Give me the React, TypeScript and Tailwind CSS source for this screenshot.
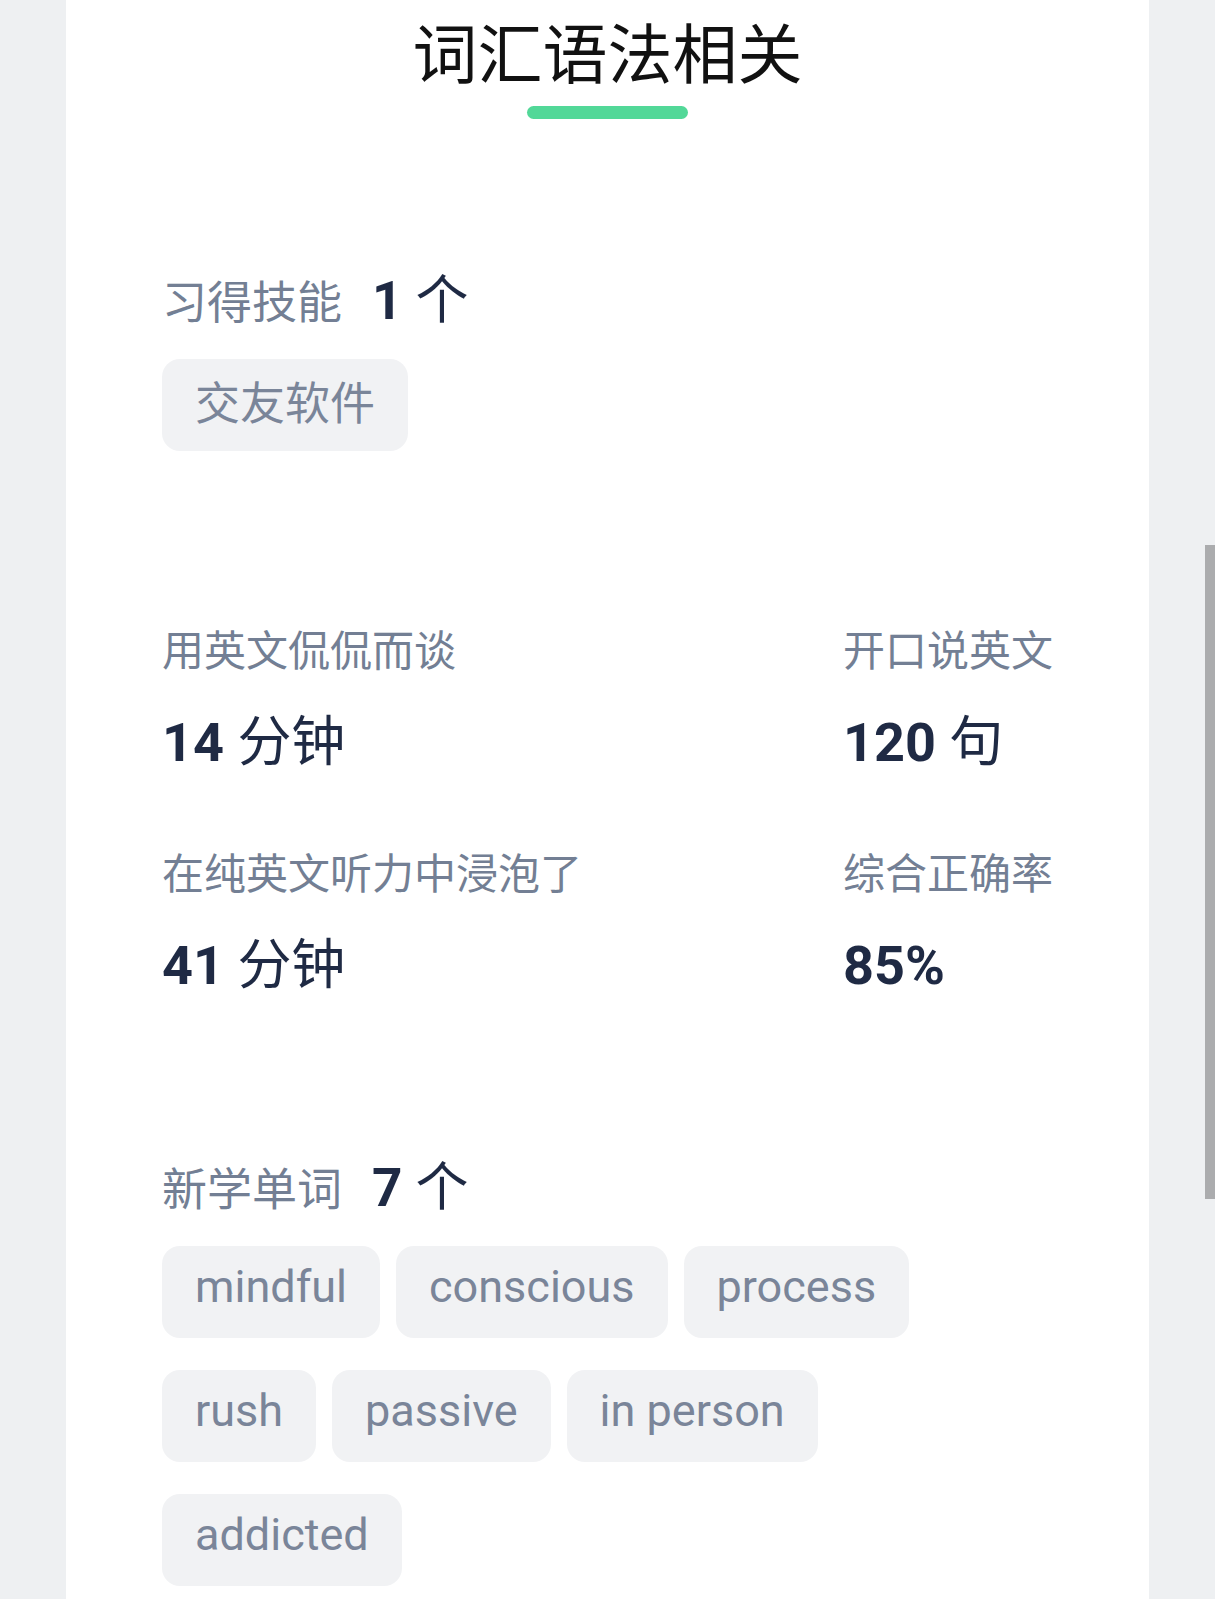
import React from "react";

const FONT = 'Roboto, "Noto Sans CJK SC", "Noto Sans", sans-serif';

function Tag({ children, latin }: { children: React.ReactNode; latin?: boolean }) {
  return (
    <div
      className={
        "flex h-[92px] items-center rounded-[18px] bg-[#f1f2f4] px-[33px] text-[45px] leading-[60px] text-[#7a8599] " +
        (latin ? "pb-[10px]" : "")
      }
    >
      {children}
    </div>
  );
}

function Heading({ label, count }: { label: string; count: string }) {
  return (
    <div className="text-[45px] leading-[60px] text-[#737f94]">
      {label}
      <span className="ml-[30px] text-[53px] text-[#1f2a44]">
        <span className="font-bold">{count}</span> 个
      </span>
    </div>
  );
}

function Stat({ label, value, unit, first }: { label: string; value: string; unit?: string; first?: boolean }) {
  return (
    <div className={first ? "" : "mt-[84px]"}>
      <div className="whitespace-nowrap text-[42px] leading-[42px] text-[#737f94]">{label}</div>
      <div className="mt-[43px] whitespace-nowrap text-[54px] leading-[54px] text-[#1f2a44]">
        <span className="font-bold">{value}</span>
        {unit ? <span> {unit}</span> : null}
      </div>
    </div>
  );
}

export default function App() {
  const words = ["mindful", "conscious", "process", "rush", "passive", "in person", "addicted"];
  return (
    <div className="relative min-h-[1599px] w-full overflow-hidden bg-[#eef0f2]" style={{ fontFamily: FONT }}>
      <div className="ml-[66px] min-h-[1599px] w-[1083px] bg-white px-[96px]">
        <div className="pt-[24px] text-center text-[65px] leading-[64px] text-[#111111]">词汇语法相关</div>
        <div className="mx-auto mt-[18px] h-[13px] w-[161px] rounded-full bg-[#52d898]" />

        <div className="mt-[152px]">
          <Heading label="习得技能" count="1" />
          <div className="mt-[25px] flex">
            <Tag>交友软件</Tag>
          </div>
        </div>

        <div className="mt-[180px] flex justify-between">
          <div>
            <Stat first label="用英文侃侃而谈" value="14" unit="分钟" />
            <Stat label="在纯英文听力中浸泡了" value="41" unit="分钟" />
          </div>
          <div className="w-[210px]">
            <Stat first label="开口说英文" value="120" unit="句" />
            <Stat label="综合正确率" value="85%" />
          </div>
        </div>

        <div className="mt-[165px]">
          <Heading label="新学单词" count="7" />
          <div className="mt-[25px] flex w-[780px] flex-wrap gap-x-[16px] gap-y-[32px]">
            {words.map((w) => (
              <Tag key={w} latin>
                {w}
              </Tag>
            ))}
          </div>
        </div>
      </div>
      <div className="absolute left-[1205px] top-[545px] h-[654px] w-[10px] bg-[#abacae]" />
    </div>
  );
}
